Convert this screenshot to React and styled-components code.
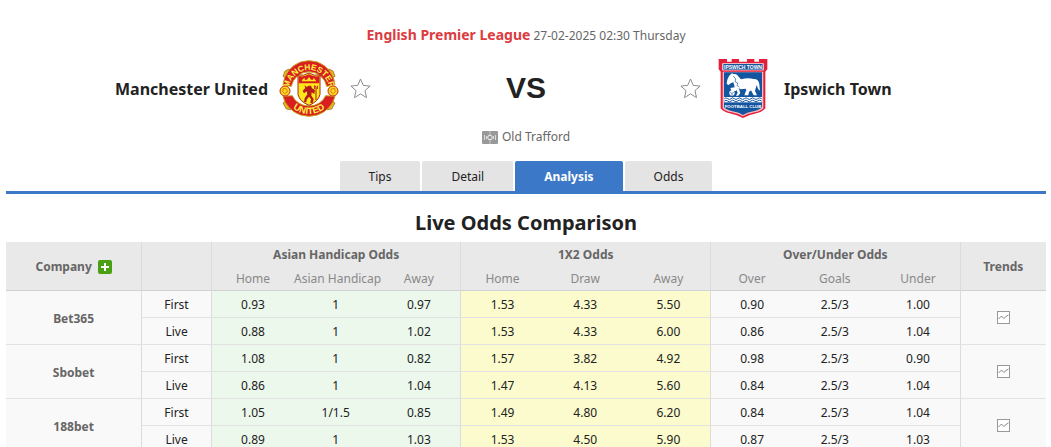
import React from "react";
import styled, { createGlobalStyle, css } from "styled-components";

const odds = [
  {
    company: "Bet365",
    lines: [
      ["First", "0.93", "1", "0.97", "1.53", "4.33", "5.50", "0.90", "2.5/3", "1.00"],
      ["Live", "0.88", "1", "1.02", "1.53", "4.33", "6.00", "0.86", "2.5/3", "1.04"],
    ],
  },
  {
    company: "Sbobet",
    lines: [
      ["First", "1.08", "1", "0.82", "1.57", "3.82", "4.92", "0.98", "2.5/3", "0.90"],
      ["Live", "0.86", "1", "1.04", "1.47", "4.13", "5.60", "0.84", "2.5/3", "1.04"],
    ],
  },
  {
    company: "188bet",
    lines: [
      ["First", "1.05", "1/1.5", "0.85", "1.49", "4.80", "6.20", "0.84", "2.5/3", "1.04"],
      ["Live", "0.89", "1", "1.03", "1.53", "4.50", "5.90", "0.87", "2.5/3", "1.03"],
    ],
  },
];

const groups = [
  { title: "Asian Handicap Odds", columns: ["Home", "Asian Handicap", "Away"] },
  { title: "1X2 Odds", columns: ["Home", "Draw", "Away"] },
  { title: "Over/Under Odds", columns: ["Over", "Goals", "Under"] },
];

const tabs = ["Tips", "Detail", "Analysis", "Odds"];

const tints = ["#ecf8ec", "#fbfbcd", "#f9f9f9"];

const UnitedCrest = () => (
  <svg width="60" height="60" viewBox="0 0 180 180" role="img" aria-label="Manchester United crest">
    <defs>
      <path id="unitedTop" d="M29 96A61 63 0 0 1 151 96" />
      <path id="unitedBottom" d="M19 118A77 77 0 0 0 161 118" />
    </defs>
    <circle cx="90" cy="90" r="62" fill="#fff" />
    <g fill="#e8b81c" stroke="#8a5a10" strokeWidth="2">
      <path d="M12 52l6-16 12-6 12 8-16 22zM168 52l-6-16-12-6-12 8 16 22z" />
      <path d="M12 132l10 18 14 2 6-10-18-20zM168 132l-10 18-14 2-6-10 18-20z" />
    </g>
    <g fill="#d81e20" stroke="#c7a11b" strokeWidth="3">
      <path d="M12 78A82 80 0 0 1 65 9Q90 1 115 9A82 80 0 0 1 168 78L143 82A54 54 0 0 0 37 82Z" />
      <path d="M12 112A82 76 0 0 0 65 168Q90 176 115 168A82 76 0 0 0 168 112L140 110A54 50 0 0 1 40 110Z" />
    </g>
    <path
      d="M57 48Q74 52 90 42Q106 52 123 48V106Q118 128 90 139Q62 128 57 106Z"
      fill="#ffe81a"
      stroke="#a22a14"
      strokeWidth="3"
    />
    <path d="M59 51Q75 55 90 46Q105 55 121 51V73H59Z" fill="#d81e20" />
    <path d="M68 67h44l-4-6-5-5v6h-7l-6-8-6 8h-7v-6l-6 5z" fill="#ffe81a" />
    <path
      d="M76 79l8 5 4-4h8l3 8 9 5-2 12-8-5-1 10 7 10-3 12h-7l2-12-6-7-7 9-1 8h-7l2-12 8-12-2-9-8 6-4-8 8-8z"
      fill="#b51b1b"
    />
    <path d="M107 80l4 5v38M107 80v10M115 80v10" stroke="#b51b1b" strokeWidth="3" fill="none" />
    <g fill="#fff048" fontFamily="'Liberation Sans', Arial, sans-serif" fontWeight="bold" textAnchor="middle">
      <text fontSize="25">
        <textPath href="#unitedTop" startOffset="50%">MANCHESTER</textPath>
      </text>
      <text fontSize="28">
        <textPath href="#unitedBottom" startOffset="50%">UNITED</textPath>
      </text>
    </g>
    <g fill="#ffd51e" stroke="#c2301c" strokeWidth="3">
      <circle cx="18" cy="96" r="15" />
      <circle cx="162" cy="96" r="15" />
    </g>
    <g fill="none" stroke="#d58216" strokeWidth="3">
      <path d="M13 88l10 2 2 9-8 5-6-6zM167 88l-10 2-2 9 8 5 6-6z" />
    </g>
  </svg>
);

const IpswichCrest = () => (
  <svg width="60" height="60" viewBox="0 0 180 180" role="img" aria-label="Ipswich Town crest">
    <path
      d="M17 0h25v8h14V0h22v8h24V0h22v8h14V0h25v31l-6 7v110q-8 11-27 15-24 5-40 14-16-9-40-14-19-4-27-15V38l-6-7z"
      fill="#e3203a"
    />
    <path d="M29 38H151V148Q143 157 124 160Q102 165 90 172Q78 165 56 160Q37 157 29 148Z" fill="#f6b9c1" />
    <path d="M33 40H147V145Q140 153 121 157Q101 161 90 168Q79 161 59 157Q40 153 33 145Z" fill="#14559f" />
    <rect x="28" y="13" width="124" height="21" fill="#fff" />
    <rect x="31" y="15" width="118" height="17" fill="#14559f" />
    <text x="90" y="29" fill="#fff" fontSize="15" fontFamily="'Liberation Sans', Arial, sans-serif" fontWeight="bold" textAnchor="middle">
      IPSWICH TOWN
    </text>
    <path
      d="M42 67Q45 51 57 43L61 45Q72 43 78 55L84 61Q105 55 121 60Q137 59 139 76L141 95Q133 90 132 77L128 88L126 96L132 109H122L114 94L108 99L106 109H94L100 93L98 89L83 91L76 87L68 96H56L52 87L65 85L63 76L61 70L53 73L47 78L41 75Z"
      fill="#fff"
    />
    <path d="M77 87L82 102L76 110H69L74 101L69 90Z" fill="#fff" />
    <path d="M61 51l7 9-2 8 8 4-2 7 7 5" fill="none" stroke="#14559f" strokeWidth="2" />
    <circle cx="57" cy="102" r="8" fill="#fff" />
    <path d="M52 100l5 4 5-5M57 104v5" fill="none" stroke="#14559f" strokeWidth="2" />
    <rect x="33" y="114" width="114" height="16" fill="#fff" />
    <path
      d="M34 119q5-5 10 0t10 0 10 0 10 0 10 0 10 0 10 0 10 0 10 0 10 0 12 0M34 126q5-5 10 0t10 0 10 0 10 0 10 0 10 0 10 0 10 0 10 0 10 0 12 0"
      fill="none"
      stroke="#14559f"
      strokeWidth="3"
    />
    <text x="90" y="147" fill="#fff" fontSize="13" fontFamily="'Liberation Sans', Arial, sans-serif" fontWeight="bold" textAnchor="middle">
      FOOTBALL CLUB
    </text>
  </svg>
);

const StarIcon = () => (
  <svg width="22" height="22" viewBox="0 0 22 22" aria-hidden="true">
    <path
      d="M10.5 1l2.8 6.4 6.8.7-5.1 4.5 1.5 7-6-3.7-6 3.7 1.5-7-5.1-4.5 6.8-.7z"
      fill="#fff"
      stroke="#8c8c8c"
      strokeWidth="1"
    />
  </svg>
);

const PitchIcon = () => (
  <svg width="16" height="13" viewBox="0 0 16 13" aria-hidden="true">
    <rect width="16" height="13" rx="1" fill="#999" />
    <path d="M8 0v4M8 9v4" stroke="#c4c4c4" fill="none" />
    <path d="M2.5 4v5M13.5 4v5M4.5 5v3M11.5 5v3" stroke="#dcdcdc" fill="none" />
    <circle cx="8" cy="6.5" r="2.3" stroke="#f4f4f4" fill="none" />
  </svg>
);

const TrendIcon = () => (
  <svg width="13" height="13" viewBox="0 0 13 13" aria-hidden="true">
    <rect x=".5" y=".5" width="12" height="12" fill="#fff" stroke="#999" />
    <path d="M1.5 8l3-3 2.3 2.5 2.2-2L11.5 4" fill="none" stroke="#888" />
  </svg>
);

const App = () => {
  return (
    <>
      <GlobalStyle />
      <Page>
        <MatchInfo>
          <League href="#league">English Premier League</League> 27-02-2025 02:30 Thursday
        </MatchInfo>
        <Teams>
          <Team $home>
            <TeamName href="#home">Manchester United</TeamName>
            <UnitedCrest />
            <IconButton type="button" aria-label="Follow Manchester United">
              <StarIcon />
            </IconButton>
          </Team>
          <Versus>VS</Versus>
          <Team>
            <IconButton type="button" aria-label="Follow Ipswich Town">
              <StarIcon />
            </IconButton>
            <IpswichCrest />
            <TeamName href="#away">Ipswich Town</TeamName>
          </Team>
        </Teams>
        <Venue>
          <PitchIcon />
          Old Trafford
        </Venue>
        <Tabs>
          {tabs.map((tab) => (
            <Tab key={tab} href={`#${tab.toLowerCase()}`} $active={tab === "Analysis"}>
              {tab}
            </Tab>
          ))}
        </Tabs>
        <Title>Live Odds Comparison</Title>
        <OddsTable>
          <colgroup>
            <Col $width="13%" />
            <Col $width="6.7%" />
            <Col $width="8%" span="9" />
            <Col $width="8.3%" />
          </colgroup>
          <thead>
            <tr>
              <HeadCell rowSpan="2" $last>
                <Company>
                  Company
                  <AddButton type="button" aria-label="Add company">
                    <svg width="8" height="8" viewBox="0 0 8 8" aria-hidden="true">
                      <path d="M4 0v8M0 4h8" stroke="#fff" strokeWidth="2" />
                    </svg>
                  </AddButton>
                </Company>
              </HeadCell>
              <HeadCell as="td" rowSpan="2" $last $divided />
              {groups.map((group) => (
                <HeadCell key={group.title} colSpan="3" scope="colgroup" $divided>
                  {group.title}
                </HeadCell>
              ))}
              <HeadCell rowSpan="2" $last $divided>
                Trends
              </HeadCell>
            </tr>
            <tr>
              {groups.map((group) =>
                group.columns.map((column, i) => (
                  <SubHeadCell key={group.title + column} $divided={i === 0}>
                    {column}
                  </SubHeadCell>
                )),
              )}
            </tr>
          </thead>
          <tbody>
            {odds.map(({ company, lines }) =>
              lines.map(([label, ...values], row) => (
                <tr key={company + label}>
                  {row === 0 && (
                    <CompanyCell rowSpan="2" scope="rowgroup">
                      {company}
                    </CompanyCell>
                  )}
                  <Cell $divided>{label}</Cell>
                  {values.map((value, i) => (
                    <Cell key={i} $divided={i % 3 === 0} $tint={tints[Math.floor(i / 3)]}>
                      {value}
                    </Cell>
                  ))}
                  {row === 0 && (
                    <TrendCell rowSpan="2" $divided>
                      <IconButton type="button" aria-label={`${company} trends`}>
                        <TrendIcon />
                      </IconButton>
                    </TrendCell>
                  )}
                </tr>
              )),
            )}
          </tbody>
        </OddsTable>
      </Page>
    </>
  );
};

const GlobalStyle = createGlobalStyle`
  * {
    box-sizing: border-box;
  }

  body {
    margin: 0;
    background-color: #ffffff;
    color: #222222;
    font-family: Tahoma, "Noto Sans", sans-serif;
    font-size: 12px;
    overflow: hidden;
  }

  a {
    color: inherit;
    text-decoration: none;
  }
`;

const Page = styled.main`
  padding: 24px 5px 0 6px;
`;

const MatchInfo = styled.div`
  line-height: 22px;
  text-align: center;
  color: #666666;
`;

const League = styled.a`
  font-size: 14px;
  font-weight: 700;
  color: #dc3c40;
`;

const Teams = styled.div`
  display: grid;
  grid-template-columns: 1fr 308px 1fr;
  align-items: center;
  margin-top: 12px;
`;

const Team = styled.div`
  display: flex;
  align-items: center;
  justify-content: ${(props) => (props.$home ? "flex-end" : "flex-start")};
  gap: 11px;
`;

const TeamName = styled.a`
  font-size: 16px;
  font-weight: 700;
  white-space: nowrap;
`;

const Versus = styled.div`
  padding-bottom: 3px;
  font-family: Arial, "Liberation Sans", sans-serif;
  font-size: 30px;
  font-weight: 700;
  text-align: center;
`;

const IconButton = styled.button`
  display: flex;
  padding: 0;
  border: none;
  background: none;
  cursor: pointer;
`;

const Venue = styled.div`
  display: flex;
  align-items: center;
  justify-content: center;
  gap: 4px;
  margin-top: 8px;
  line-height: 20px;
  color: #666666;
`;

const Tabs = styled.nav`
  display: flex;
  justify-content: center;
  gap: 2px;
  margin-top: 14px;
  border-bottom: 3px solid #3b78c7;
`;

const Tab = styled.a`
  padding: 2px 29px 0;
  border-radius: 2px 2px 0 0;
  line-height: 28px;
  background-color: #e4e4e4;

  ${(props) =>
    props.$active &&
    css`
      background-color: #3b78c7;
      color: #ffffff;
      font-weight: 700;
    `}
`;

const Title = styled.h1`
  margin: 14px 0 4px;
  font-size: 20px;
  font-weight: 700;
  line-height: 30px;
  text-align: center;
`;

const OddsTable = styled.table`
  width: 100%;
  table-layout: fixed;
  border-collapse: separate;
  border-spacing: 0;
  text-align: center;
`;

const Col = styled.col`
  width: ${(props) => props.$width};
`;

const divider = css`
  border-left: ${(props) => (props.$divided ? "1px solid #dcdcdc" : "none")};
`;

const HeadCell = styled.th`
  ${divider}
  height: 25px;
  padding: ${(props) => (props.$last ? "2px 0 0" : "0")};
  border-bottom: ${(props) => (props.$last ? "1px solid #d2d2d2" : "none")};
  background-color: #e9e9e9;
  color: #666666;
  font-weight: 700;
  line-height: 24px;
`;

const SubHeadCell = styled.th`
  ${divider}
  height: 24px;
  padding: 0;
  border-bottom: 1px solid #d2d2d2;
  background-color: #e9e9e9;
  color: #888888;
  font-weight: 400;
  line-height: 23px;
  white-space: nowrap;
`;

const Cell = styled.td`
  ${divider}
  height: 27px;
  padding: 2px 0 0;
  border-bottom: 1px solid #e2e2e2;
  background-color: ${(props) => props.$tint || "#f9f9f9"};
  line-height: 24px;
`;

const TrendCell = styled(Cell)`
  padding: 0;

  ${IconButton} {
    margin: 0 auto;
  }
`;

const CompanyCell = styled.th`
  padding: 2px 0 0;
  border-bottom: 1px solid #e2e2e2;
  background-color: #f9f9f9;
  color: #666666;
  font-weight: 700;
`;

const Company = styled.div`
  display: flex;
  align-items: center;
  justify-content: center;
  gap: 6px;
`;

const AddButton = styled.button`
  display: flex;
  align-items: center;
  justify-content: center;
  width: 14px;
  height: 14px;
  padding: 0;
  border: none;
  border-radius: 2px;
  background-color: #4aa013;
  cursor: pointer;
`;

export default App;
